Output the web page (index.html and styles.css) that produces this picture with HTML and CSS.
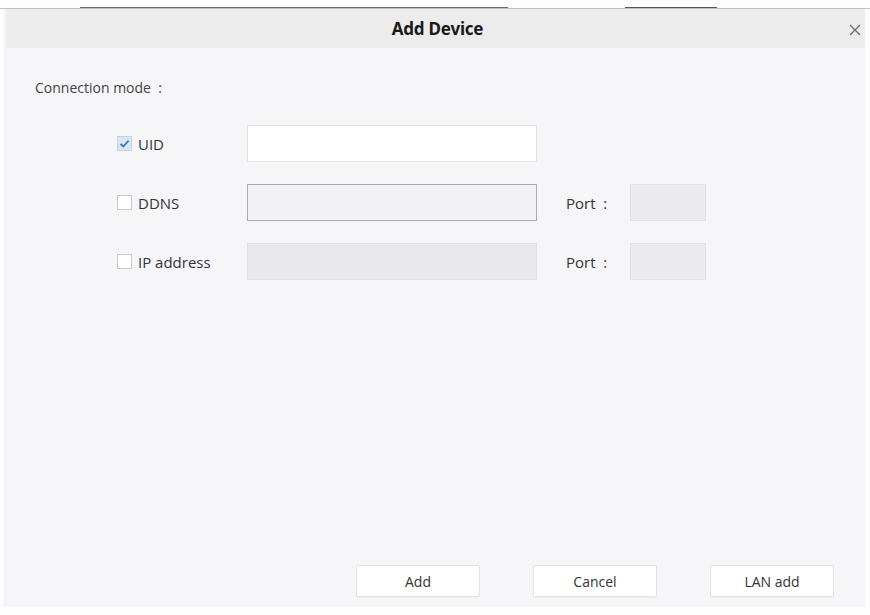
FILE: index.html
```html
<!DOCTYPE html>
<html>
<head>
    <link rel="stylesheet" href="styles.css">
</head>
<body>
    <div class="topline"></div>
    <div class="dialog">
        <div class="dialog-header">
            <span class="dialog-title">Add Device</span>
            <span class="dialog-close">
                <svg width="12" height="12" viewBox="0 0 12 12">
                    <path d="M1 1 L11 11 M11 1 L1 11" stroke="#6b6b6b" stroke-width="1.3" fill="none"/>
                </svg>
            </span>
        </div>
        <div class="dialog-body">
            <div class="mode-label">Connection mode &nbsp;:</div>
            <div class="mode-form">
                <label class="mode-option">
                    <span class="check checked">
                        <svg width="13" height="13" viewBox="0 0 13 13">
                            <path d="M2.5 6.8 L5.3 9.5 L10.6 3.6" stroke="#3a78b5" stroke-width="1.8" fill="none"/>
                        </svg>
                    </span>
                    UID
                </label>
                <div class="field field-active"></div>
                <div></div>
                <div></div>

                <label class="mode-option">
                    <span class="check"></span>
                    DDNS
                </label>
                <div class="field field-focus"></div>
                <div class="port-label">Port &nbsp;:</div>
                <div class="port-field"></div>

                <label class="mode-option">
                    <span class="check"></span>
                    IP address
                </label>
                <div class="field field-disabled"></div>
                <div class="port-label">Port &nbsp;:</div>
                <div class="port-field"></div>
            </div>
            <div class="dialog-actions">
                <button class="btn">Add</button>
                <button class="btn">Cancel</button>
                <button class="btn">LAN add</button>
            </div>
        </div>
    </div>
</body>
</html>
```

FILE: styles.css
```css
body {
    margin: 0;
    background-color: #fdfdfd;
    font-family: "Open Sans", "Noto Sans", sans-serif;
    color: #333;
}

.topline {
    height: 8px;
    border-bottom: 1px solid #c4c4c4;
    background: linear-gradient(to right, transparent 80px, #6a6a6a 80px, #6a6a6a 508px, transparent 508px, transparent 625px, #555 625px, #555 717px, transparent 717px) bottom / 100% 1px no-repeat;
}

.dialog {
    margin: 0 5px 0 6px;
    height: 598px;
    display: flex;
    flex-direction: column;
    background-color: #f6f6f9;
    box-shadow: -2px 0 3px rgba(0, 0, 0, 0.05);
}

.dialog-header {
    position: relative;
    height: 39px;
    background-color: #ececec;
    display: flex;
    align-items: center;
    justify-content: center;
}

.dialog-title {
    font-family: "Noto Sans", sans-serif;
    font-weight: bold;
    font-size: 17px;
    color: #1a1a1a;
    letter-spacing: -0.2px;
    margin-left: 4px;
}

.dialog-close {
    position: absolute;
    right: 4px;
    top: 15px;
    width: 12px;
    height: 12px;
    display: flex;
}

.dialog-body {
    flex-grow: 1;
    display: flex;
    flex-direction: column;
    padding: 31px 31px 10px 29px;
}

.mode-label {
    font-size: 14px;
    line-height: 18px;
    color: #444;
}

.mode-form {
    margin: 28px 0 0 82px;
    display: grid;
    grid-template-columns: 130px 290px 93px 76px;
    row-gap: 22px;
    grid-auto-rows: 37px;
    align-items: center;
}

.mode-option {
    display: flex;
    align-items: center;
    gap: 6px;
    font-size: 15px;
    color: #333;
}

.check {
    width: 13px;
    height: 13px;
    border: 1px solid #c9c9c9;
    background-color: #fff;
    display: flex;
    align-items: center;
    justify-content: center;
}

.check.checked {
    background-color: #d9e6f4;
    border-color: #c3d3e4;
}

.field {
    box-sizing: border-box;
    height: 37px;
    border: 1px solid #e4e4e6;
}

.field-active {
    background-color: #fff;
}

.field-focus {
    background-color: #f2f2f4;
    border-color: #aaaaaa;
}

.field-disabled {
    background-color: #e9e9ec;
    border-color: #e2e2e4;
}

.port-label {
    font-size: 15px;
    color: #333;
    padding-left: 29px;
}

.port-field {
    box-sizing: border-box;
    height: 37px;
    background-color: #ebebed;
    border: 1px solid #e2e2e4;
}

.dialog-actions {
    margin-top: auto;
    display: flex;
    justify-content: flex-end;
    gap: 53px;
}

.btn {
    width: 124px;
    height: 32px;
    background-color: #fff;
    border: 1px solid #e3e3e3;
    border-radius: 2px;
    font-family: "Open Sans", "Noto Sans", sans-serif;
    font-size: 14px;
    color: #333;
    box-shadow: 0 1px 1px rgba(0, 0, 0, 0.04);
}
```
